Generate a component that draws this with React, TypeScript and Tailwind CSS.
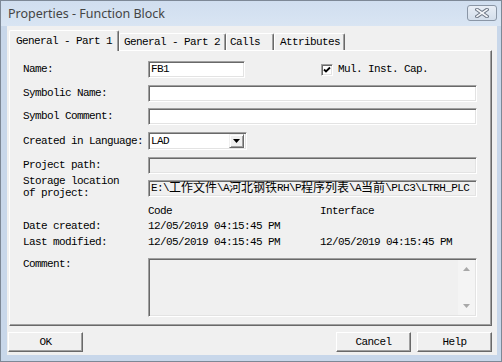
const mono = "font-['Liberation_Mono','Noto_Sans_CJK_SC',monospace] text-[11px] tracking-[-0.6px] text-black";

function Field({ className = "", disabled = false, children }: { className?: string; disabled?: boolean; children?: React.ReactNode }) {
  return (
    <div
      className={`h-[17px] border border-t-[#a0a0a0] border-l-[#a0a0a0] border-r-white border-b-white shadow-[inset_1px_1px_0_#696969,inset_-1px_-1px_0_#e3e3e3] flex items-center pl-[2px] overflow-hidden whitespace-nowrap ${
        disabled ? "bg-[#f0f0f0]" : "bg-white"
      } ${className}`}
    >
      {children}
    </div>
  );
}

function Button({ label, className = "" }: { label: string; className?: string }) {
  return (
    <div
      className={`w-[75px] h-[20px] flex items-center justify-center bg-[#f0f0f0] border border-t-white border-l-white border-r-[#696969] border-b-[#696969] shadow-[inset_-1px_-1px_0_#a0a0a0] ${mono} ${className}`}
    >
      {label}
    </div>
  );
}

function Tab({ label, active = false, w, pl }: { label: string; active?: boolean; w: string; pl: string }) {
  return (
    <div
      className={`${w} ${pl} flex items-center bg-[#f0f0f0] border-t border-l border-r border-t-white border-l-white border-r-[#696969] rounded-t-[2px] shadow-[inset_-1px_0_0_#a0a0a0] ${
        active ? "h-[21px] relative z-10 -mb-px" : "h-[17px] mt-[3px]"
      } ${mono}`}
    >
      {label}
    </div>
  );
}

const Label = ({ children }: { children?: React.ReactNode }) => (
  <div className="w-[125px] shrink-0">{children}</div>
);

const cjk = "text-[12px] tracking-normal";

export default function App() {
  return (
    <div className="w-[502px] h-[362px] flex flex-col border border-[#7d8896] bg-[#c8d7ea] overflow-hidden">
      {/* title bar */}
      <div className="h-[25px] shrink-0 flex items-start justify-between bg-gradient-to-b from-[#d0deef] to-[#d9e5f3]">
        <div className="pl-[7px] pt-[4px] font-['Noto_Sans',sans-serif] text-[12.5px] text-[#444]">
          Properties - Function Block
        </div>
        <div className="mt-[4px] mr-[4px] w-[30px] h-[16px] rounded-[3px] border border-[#8a96a6] bg-gradient-to-b from-[#e8eef6] to-[#d3deeb] flex items-center justify-center">
          <svg width="14" height="10" viewBox="0 0 14 10">
            <path d="M2 1.5 L12 8.5 M12 1.5 L2 8.5" stroke="#6d7685" strokeWidth="3.6" strokeLinecap="square" />
            <path d="M2 1.5 L12 8.5 M12 1.5 L2 8.5" stroke="#f4f6f9" strokeWidth="1.6" strokeLinecap="square" />
          </svg>
        </div>
      </div>

      {/* dialog body */}
      <div className="flex-1 ml-[6px] mr-[4px] mb-[6px] bg-[#f0f0f0] flex flex-col">
        {/* tabs */}
        <div className="pt-[4px] ml-[2px] flex items-start h-[24px]">
          <Tab label="General - Part 1" active w="w-[110px]" pl="pl-[6px]" />
          <Tab label="General - Part 2" w="w-[107px]" pl="pl-[4px]" />
          <Tab label="Calls" w="w-[48px]" pl="pl-[3px]" />
          <Tab label="Attributes" w="w-[71px]" pl="pl-[5px]" />
        </div>

        {/* panel */}
        <div className={`ml-[2px] mr-[5px] h-[276px] border border-t-white border-l-white border-r-[#696969] border-b-[#696969] shadow-[inset_-1px_-1px_0_#a0a0a0] pl-[13px] flex flex-col ${mono}`}>
          <div className="mt-[10px] flex items-center h-[17px]">
            <Label>Name:</Label>
            <Field className="w-[97px]">FB1</Field>
            <div className="ml-[76px] w-[12px] h-[12px] bg-white border border-t-[#a0a0a0] border-l-[#a0a0a0] border-r-white border-b-white shadow-[inset_1px_1px_0_#696969,inset_-1px_-1px_0_#e3e3e3] flex items-center justify-center">
              <svg width="8" height="8" viewBox="0 0 8 8">
                <path d="M1 3.5 L3 5.5 L7 1.5" stroke="black" strokeWidth="1.8" fill="none" />
              </svg>
            </div>
            <div className="ml-[5px]">Mul. Inst. Cap.</div>
          </div>

          <div className="mt-[7px] flex items-center h-[17px]">
            <Label>Symbolic Name:</Label>
            <Field className="w-[329px]" />
          </div>

          <div className="mt-[6px] flex items-center h-[17px]">
            <Label>Symbol Comment:</Label>
            <Field className="w-[329px]" />
          </div>

          <div className="mt-[7px] flex items-center h-[18px]">
            <Label>Created in Language:</Label>
            <div className="w-[99px] h-[18px] bg-white border border-t-[#a0a0a0] border-l-[#a0a0a0] border-r-white border-b-white shadow-[inset_1px_1px_0_#696969,inset_-1px_-1px_0_#e3e3e3] flex items-center pl-[2px] pr-[2px]">
              <div className="flex-1">LAD</div>
              <div className="w-[15px] h-[14px] bg-[#f0f0f0] border border-t-[#f0f0f0] border-l-[#f0f0f0] border-r-[#696969] border-b-[#696969] shadow-[inset_1px_1px_0_white,inset_-1px_-1px_0_#a0a0a0] flex items-center justify-center">
                <svg width="7" height="4" viewBox="0 0 7 4">
                  <path d="M0 0 H7 L3.5 4 Z" fill="black" />
                </svg>
              </div>
            </div>
          </div>

          <div className="mt-[7px] flex items-center h-[17px]">
            <Label>Project path:</Label>
            <Field className="w-[329px]" disabled />
          </div>

          <div className="mt-px flex items-start h-[24px]">
            <Label>
              <div className="leading-[12px]">Storage location</div>
              <div className="leading-[12px]">of project:</div>
            </Label>
            <Field className="w-[329px] mt-[5px]" disabled>
              E:\<span className={cjk}>工作文件</span>\A<span className={cjk}>河北钢铁</span>RH\P
              <span className={cjk}>程序列表</span>\A<span className={cjk}>当前</span>\PLC3\LTRH_PLC
            </Field>
          </div>

          <div className="mt-[5px] flex items-center h-[14px]">
            <Label />
            <div className="w-[172px]">Code</div>
            <div>Interface</div>
          </div>

          <div className="mt-px flex items-center h-[14px]">
            <Label>Date created:</Label>
            <div className="w-[172px]">12/05/2019 04:15:45 PM</div>
          </div>

          <div className="mt-[2px] flex items-center h-[14px]">
            <Label>Last modified:</Label>
            <div className="w-[172px]">12/05/2019 04:15:45 PM</div>
            <div>12/05/2019 04:15:45 PM</div>
          </div>

          <div className="mt-[9px] flex items-start">
            <Label>
              <div className="leading-[12px]">Comment:</div>
            </Label>
            <div className="w-[329px] h-[59px] bg-[#f0f0f0] border border-t-[#a0a0a0] border-l-[#a0a0a0] border-r-white border-b-white shadow-[inset_1px_1px_0_#696969,inset_-1px_-1px_0_#e3e3e3] flex justify-end pt-px pr-px pb-px">
              <div className="w-[17px] h-full bg-[#f4f4f4] flex flex-col items-center justify-between py-[7px]">
                <svg width="7" height="4" viewBox="0 0 7 4">
                  <path d="M0 4 H7 L3.5 0 Z" fill="#a8a8a8" />
                </svg>
                <svg width="7" height="4" viewBox="0 0 7 4">
                  <path d="M0 0 H7 L3.5 4 Z" fill="#a8a8a8" />
                </svg>
              </div>
            </div>
          </div>
        </div>

        {/* buttons */}
        <div className="mt-[6px] ml-px mr-[5px] flex items-center">
          <Button label="OK" />
          <div className="flex-1" />
          <Button label="Cancel" />
          <Button label="Help" className="ml-[6px]" />
        </div>
      </div>
    </div>
  );
}
